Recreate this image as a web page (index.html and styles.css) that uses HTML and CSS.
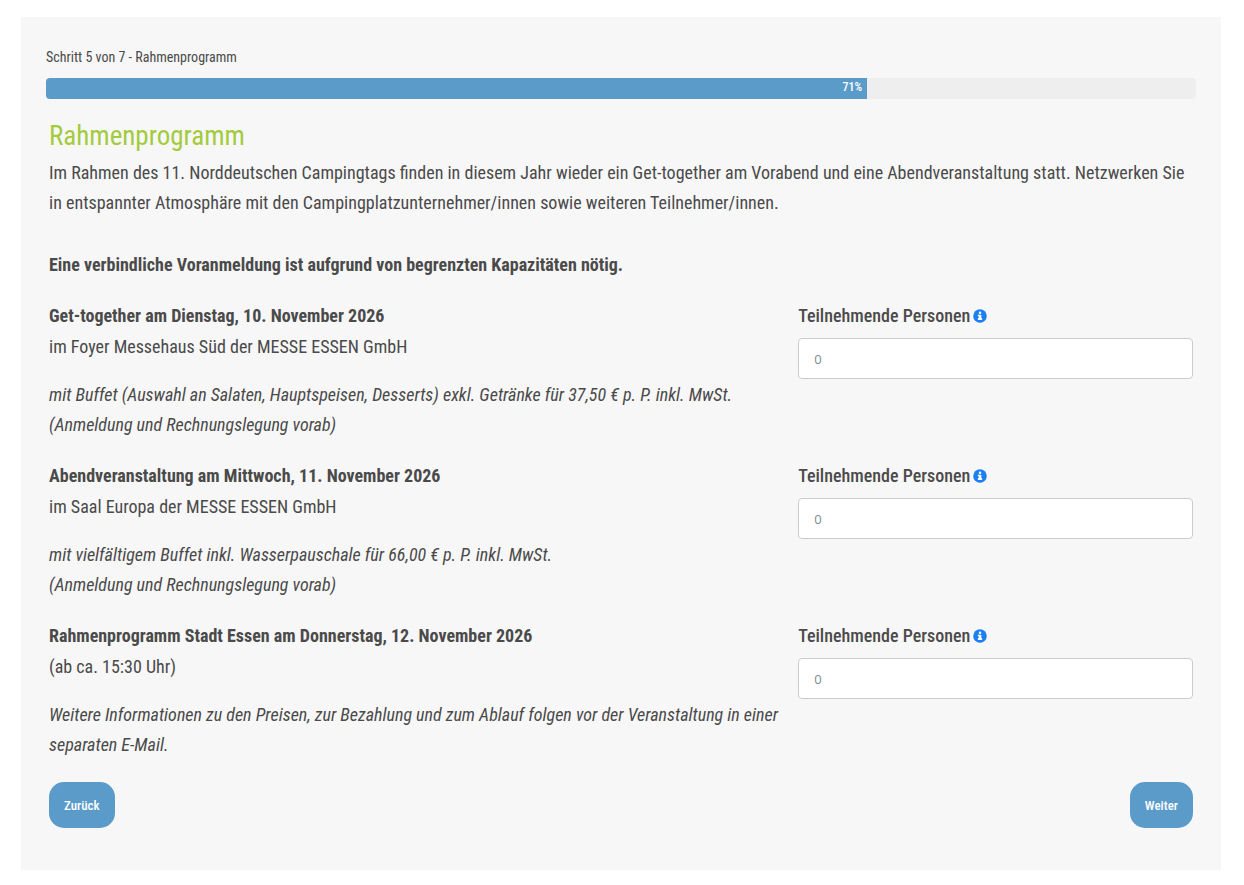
FILE: index.html
```html
<!DOCTYPE html>
<html lang="de">
<head>
  <meta charset="UTF-8" />
  <meta name="viewport" content="width=device-width, initial-scale=1.0" />
  <title>Anmeldung - Rahmenprogramm</title>
  <link rel="stylesheet" href="styles.css">
</head>
<body>
  <svg width="0" height="0" class="sprite" aria-hidden="true">
    <symbol id="info" viewBox="0 0 512 512">
      <circle cx="256" cy="256" r="248" fill="#1a7ff0" />
      <circle cx="256" cy="138" r="48" fill="#fff" />
      <path d="M188 206h118v134h18c7 0 12 5 12 12v34c0 7-5 12-12 12H188c-7 0-12-5-12-12v-34c0-7 5-12 12-12h20v-76h-20c-7 0-12-5-12-12v-34c0-7 5-12 12-12z" fill="#fff" />
    </symbol>
  </svg>

  <form class="card">
    <p class="step">Schritt 5 von 7 - Rahmenprogramm</p>
    <div class="progress">
      <div class="progress-bar" style="width: 71.4%">71%</div>
    </div>

    <div class="content">
      <h1>Rahmenprogramm</h1>
      <p class="intro">Im Rahmen des 11. Norddeutschen Campingtags finden in diesem Jahr wieder ein Get-together am Vorabend und eine Abendveranstaltung statt. Netzwerken Sie in entspannter Atmosphäre mit den Campingplatzunternehmer/innen sowie weiteren Teilnehmer/innen.</p>
      <p class="notice"><strong>Eine verbindliche Voranmeldung ist aufgrund von begrenzten Kapazitäten nötig.</strong></p>

      <div class="events">
        <div class="event">
          <div>
            <p><strong>Get-together am Dienstag, 10. November 2026</strong><br>im Foyer Messehaus Süd der MESSE ESSEN GmbH</p>
            <p class="details">mit Buffet (Auswahl an Salaten, Hauptspeisen, Desserts) exkl. Getränke für 37,50 € p. P. inkl. MwSt.<br>(Anmeldung und Rechnungslegung vorab)</p>
          </div>
          <div class="field">
            <label for="persons-1">Teilnehmende Personen<svg class="info"><use href="#info" /></svg></label>
            <input type="number" id="persons-1" name="persons-1" min="0" placeholder="0">
          </div>
        </div>

        <div class="event">
          <div>
            <p><strong>Abendveranstaltung am Mittwoch, 11. November 2026</strong><br>im Saal Europa der MESSE ESSEN GmbH</p>
            <p class="details">mit vielfältigem Buffet inkl. Wasserpauschale für 66,00 € p. P. inkl. MwSt.<br>(Anmeldung und Rechnungslegung vorab)</p>
          </div>
          <div class="field">
            <label for="persons-2">Teilnehmende Personen<svg class="info"><use href="#info" /></svg></label>
            <input type="number" id="persons-2" name="persons-2" min="0" placeholder="0">
          </div>
        </div>

        <div class="event">
          <div>
            <p><strong>Rahmenprogramm Stadt Essen am Donnerstag, 12. November 2026</strong><br>(ab ca. 15:30 Uhr)</p>
            <p class="details">Weitere Informationen zu den Preisen, zur Bezahlung und zum Ablauf folgen vor der Veranstaltung in einer separaten E-Mail.</p>
          </div>
          <div class="field">
            <label for="persons-3">Teilnehmende Personen<svg class="info"><use href="#info" /></svg></label>
            <input type="number" id="persons-3" name="persons-3" min="0" placeholder="0">
          </div>
        </div>
      </div>

      <div class="buttons">
        <button type="button">Zurück</button>
        <button type="submit">Weiter</button>
      </div>
    </div>
  </form>
</body>
</html>
```

FILE: styles.css
```css
* {
  box-sizing: border-box;
}
body {
  margin: 0;
  padding: 17px 23px 15px 21px;
  background-color: #fff;
  color: #4a4a4a;
  font-family: 'Roboto Condensed', Roboto, sans-serif;
  font-size: 18px;
  line-height: 31px;
}
h1, p {
  margin: 0;
}
.sprite {
  position: absolute;
}
.card {
  max-width: 1200px;
  margin: 0 auto;
  padding: 30px 25px 42px;
  background-color: #f7f7f7;
}
.step {
  margin-bottom: 11px;
  font-size: 14px;
  line-height: 20px;
}
.progress {
  background-color: #eee;
  border-radius: 4px;
}
.progress-bar {
  height: 21px;
  padding-right: 5px;
  background-color: #5b9bc9;
  border-radius: 4px 0 0 4px;
  color: #fff;
  font-size: 12px;
  font-weight: 500;
  line-height: 18px;
  text-align: right;
}
.content {
  padding: 19px 3px 0;
}
h1 {
  margin-bottom: 4px;
  color: #a2cb3d;
  font-size: 27px;
  font-weight: 400;
  line-height: 36px;
}
.intro {
  line-height: 30px;
}
.notice {
  margin: 31px 0 20px;
}
.events {
  display: grid;
  gap: 20px;
}
.event {
  display: grid;
  grid-template-columns: 13fr 7fr;
  gap: 16px;
}
.details {
  margin-top: 18px;
  font-style: italic;
  line-height: 30px;
}
.field label {
  display: flex;
  align-items: center;
  gap: 3px;
  margin-bottom: 7px;
  font-weight: 500;
}
.info {
  width: 14px;
  height: 14px;
}
.field input {
  display: block;
  width: 100%;
  height: 41px;
  padding: 0 15px;
  background-color: #fff;
  border: 1px solid #ccc;
  border-radius: 4px;
  color: #4a4a4a;
  font-family: 'Open Sans', sans-serif;
  font-size: 13px;
}
.field input::placeholder {
  color: #7a8b8b;
}
.buttons {
  display: flex;
  justify-content: space-between;
  margin-top: 22px;
}
button {
  height: 46px;
  padding: 0 15px;
  background-color: #5b9bc9;
  border: none;
  border-radius: 15px;
  color: #fff;
  font-family: inherit;
  font-size: 13px;
  font-weight: 500;
  cursor: pointer;
}
```
